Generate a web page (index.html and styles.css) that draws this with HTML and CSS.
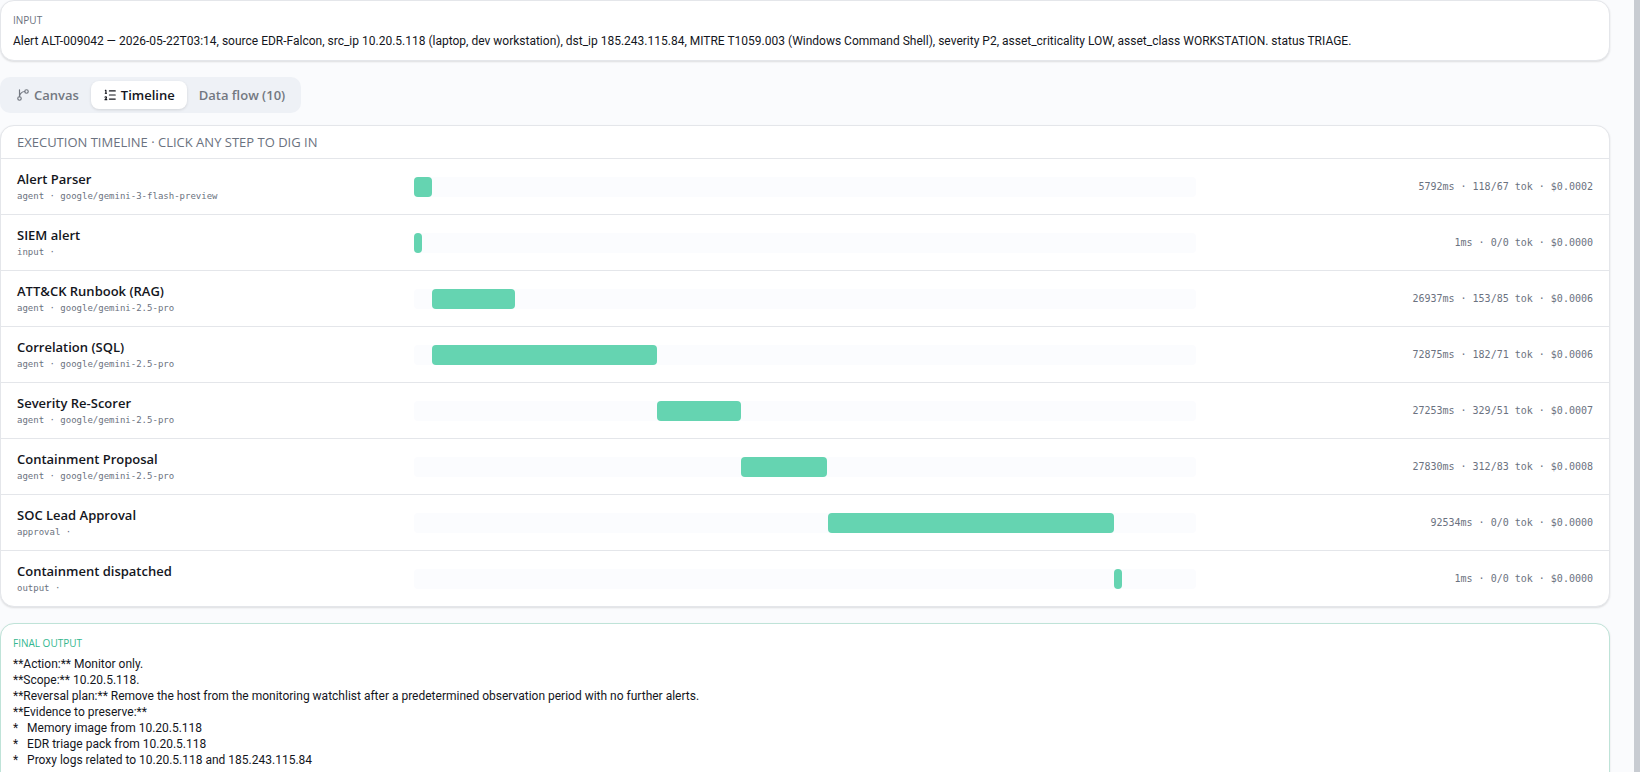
FILE: index.html
```html
<!DOCTYPE html>
<html lang="en">
<head>
<meta charset="UTF-8">
<meta name="viewport" content="width=device-width, initial-scale=1.0">
<title>Run details</title>
<link rel="stylesheet" href="styles.css">
</head>
<body>
<div class="page">
    <main class="content">
        <section class="card box">
            <h2 class="label">Input</h2>
            <p class="text">Alert ALT-009042 — 2026-05-22T03:14, source EDR-Falcon, src_ip 10.20.5.118 (laptop, dev workstation), dst_ip 185.243.115.84, MITRE T1059.003 (Windows Command Shell), severity P2, asset_criticality LOW, asset_class WORKSTATION. status TRIAGE.</p>
        </section>

        <div class="tabs" role="tablist">
            <button class="tab" role="tab" type="button">
                <svg class="icon" viewBox="0 0 24 24"><path d="M15 6a9 9 0 0 0-9 9V3"/><circle cx="18" cy="6" r="3"/><circle cx="6" cy="18" r="3"/></svg>
                Canvas
            </button>
            <button class="tab active" role="tab" type="button" aria-selected="true">
                <svg class="icon" viewBox="0 0 24 24"><path d="M11 5h10"/><path d="M11 12h10"/><path d="M11 19h10"/><path d="M4 4h1v5"/><path d="M4 9h2"/><path d="M6.5 20H3.4c0-1 2.6-1.925 2.6-3.5a1.5 1.5 0 0 0-2.6-1.02"/></svg>
                Timeline
            </button>
            <button class="tab" role="tab" type="button">Data flow (10)</button>
        </div>

        <section class="card timeline">
            <h2 class="timeline-title">Execution timeline · click any step to dig in</h2>
            <div id="steps"></div>
        </section>

        <section class="card box output">
            <h2 class="label">Final output</h2>
            <pre class="text">**Action:** Monitor only.
**Scope:** 10.20.5.118.
**Reversal plan:** Remove the host from the monitoring watchlist after a predetermined observation period with no further alerts.
**Evidence to preserve:**
*   Memory image from 10.20.5.118
*   EDR triage pack from 10.20.5.118
*   Proxy logs related to 10.20.5.118 and 185.243.115.84</pre>
        </section>
    </main>
    <div class="scrollbar"></div>
</div>
<script src="script.js"></script>
</body>
</html>
```
FILE: styles.css
```css
* {
    box-sizing: border-box;
    margin: 0;
}
body {
    font-family: "Open Sans", "Noto Sans", sans-serif;
    font-size: 12px;
    line-height: 16px;
    color: #14161d;
    background-color: #fafbfd;
}
.page {
    display: flex;
    height: 100vh;
    overflow: hidden;
}
.content {
    flex: 1;
    min-width: 0;
    padding-right: 24px;
}
.scrollbar {
    width: 6px;
    background-color: #c8ccd2;
}
.card {
    background-color: #fff;
    border: 1px solid #e4e6ea;
    border-radius: 14px;
    box-shadow: 0 1px 2px rgba(0, 0, 0, 0.12);
    overflow: hidden;
}
.box {
    padding: 12px 12px 11px;
}
.label {
    margin-bottom: 5px;
    font-size: 10px;
    font-weight: 400;
    line-height: 15px;
    text-transform: uppercase;
    color: #6b7280;
}
.text {
    font-family: Roboto, "Open Sans", sans-serif;
    white-space: pre-wrap;
}

/* tabs */
.tabs {
    display: inline-flex;
    margin: 16px 0 12px;
    padding: 4px;
    border-radius: 10px;
    background-color: #eef1f6;
    vertical-align: top;
}
.tab {
    display: flex;
    align-items: center;
    gap: 4px;
    height: 28px;
    padding: 0 12px;
    border: 0;
    border-radius: 8px;
    background: none;
    font: 600 13px/20px "Open Sans", "Noto Sans", sans-serif;
    color: #737881;
    cursor: pointer;
}
.tab.active {
    color: #14161d;
    background-color: #fff;
    box-shadow: 0 1px 3px rgba(0, 0, 0, 0.12);
}
.icon {
    width: 14px;
    height: 14px;
    fill: none;
    stroke: currentColor;
    stroke-width: 2;
    stroke-linecap: round;
    stroke-linejoin: round;
}

/* timeline */
.timeline-title {
    padding: 8px 16px;
    font-size: 13px;
    font-weight: 400;
    line-height: 16px;
    text-transform: uppercase;
    color: #6b7280;
}
.step {
    display: grid;
    grid-template-columns: repeat(12, 1fr);
    gap: 12px;
    align-items: center;
    width: 100%;
    height: 56px;
    padding: 0 16px;
    border: 0;
    border-top: 1px solid #e4e6ea;
    background: none;
    font: inherit;
    color: inherit;
    text-align: left;
    cursor: pointer;
}
.step-info {
    grid-column: span 3;
    padding-bottom: 2px;
}
.step-name {
    display: block;
    font-size: 13px;
    font-weight: 600;
    line-height: 20px;
}
.step-kind {
    display: block;
    font-family: "DejaVu Sans Mono", monospace;
    font-size: 9px;
    line-height: 14px;
    color: #6b7280;
}
.track {
    grid-column: span 6;
    height: 20px;
    border-radius: 4px;
    background-color: #fbfcfe;
}
.bar {
    display: block;
    height: 20px;
    min-width: 8px;
    border-radius: 4px;
    background-color: #65d4b1;
}
.step-stats {
    grid-column: span 3;
    font-family: "DejaVu Sans Mono", monospace;
    font-size: 10px;
    text-align: right;
    color: #6b7280;
}

.output {
    margin-top: 16px;
    height: 200px;
    border-color: #bfe3d8;
}
.output .label {
    color: #34b78f;
}
```
FILE: script.js
```js
const total = 253000;

const steps = [
    { name: 'Alert Parser', kind: 'agent', model: 'google/gemini-3-flash-preview', start: 0, ms: 5792, tok: '118/67', cost: '0.0002' },
    { name: 'SIEM alert', kind: 'input', model: '', start: 0, ms: 1, tok: '0/0', cost: '0.0000' },
    { name: 'ATT&CK Runbook (RAG)', kind: 'agent', model: 'google/gemini-2.5-pro', start: 5795, ms: 26937, tok: '153/85', cost: '0.0006' },
    { name: 'Correlation (SQL)', kind: 'agent', model: 'google/gemini-2.5-pro', start: 5795, ms: 72875, tok: '182/71', cost: '0.0006' },
    { name: 'Severity Re-Scorer', kind: 'agent', model: 'google/gemini-2.5-pro', start: 78680, ms: 27253, tok: '329/51', cost: '0.0007' },
    { name: 'Containment Proposal', kind: 'agent', model: 'google/gemini-2.5-pro', start: 105940, ms: 27830, tok: '312/83', cost: '0.0008' },
    { name: 'SOC Lead Approval', kind: 'approval', model: '', start: 133780, ms: 92534, tok: '0/0', cost: '0.0000' },
    { name: 'Containment dispatched', kind: 'output', model: '', start: 226320, ms: 1, tok: '0/0', cost: '0.0000' }
];

const list = document.getElementById('steps');

steps.forEach(step => {
    const row = document.createElement('button');
    row.type = 'button';
    row.className = 'step';
    row.innerHTML = `
        <span class="step-info">
            <span class="step-name">${step.name.replace('&', '&amp;')}</span>
            <span class="step-kind">${step.kind} · ${step.model}</span>
        </span>
        <span class="track">
            <span class="bar" style="margin-left: ${step.start / total * 100}%; width: ${step.ms / total * 100}%"></span>
        </span>
        <span class="step-stats">${step.ms}ms · ${step.tok} tok · $${step.cost}</span>`;
    list.appendChild(row);
});
```
